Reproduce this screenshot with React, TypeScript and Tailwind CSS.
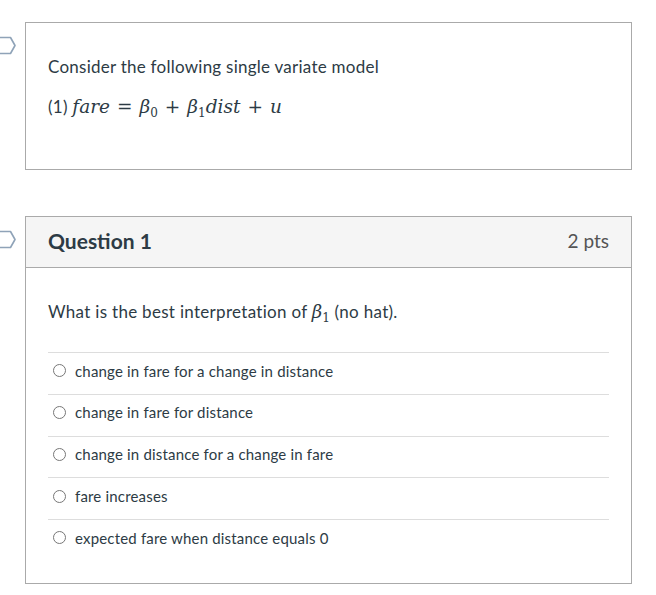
import React from "react";

const Tag = () => (
  <svg width="17" height="19" viewBox="0 0 17 19" className="absolute left-0" style={{ top: 14 }}>
    <path d="M-2 1.5 H10.5 L15 9.5 L10.5 17.5 H-2" fill="white" stroke="#8fa3b8" strokeWidth="1.6" strokeLinejoin="round" />
  </svg>
);

const serif = '"DejaVu Serif", "Liberation Serif", serif';

const M = ({ children, className = "" }: { children: React.ReactNode; className?: string }) => (
  <span className={`italic ${className}`} style={{ fontFamily: serif }}>{children}</span>
);

const Op = ({ children }: { children: React.ReactNode }) => (
  <span className="not-italic mx-[7px]" style={{ fontFamily: serif }}>{children}</span>
);

const Sub = ({ children }: { children: React.ReactNode }) => (
  <span className="not-italic text-[12px] relative top-[4px]" style={{ fontFamily: serif }}>{children}</span>
);

const answers = [
  "change in fare for a change in distance",
  "change in fare for distance",
  "change in distance for a change in fare",
  "fare increases",
  "expected fare when distance equals 0",
];

export default function App() {
  return (
    <div className="w-[656px] h-[595px] bg-white text-[#2d3b45] pt-[22px]" style={{ fontFamily: 'Lato, "Noto Sans", sans-serif' }}>
      <div className="relative">
        <Tag />
        <div className="ml-[25px] w-[607px] h-[148px] border border-[#aaaaaa] px-[22px] pt-[31px]">
          <p className="text-[17px] tracking-[0.25px] leading-[26px]">Consider the following single variate model</p>
          <p className="text-[17px] tracking-[0.25px] leading-[26px] mt-[13px] flex items-baseline">
            <span>(1)&nbsp;</span>
            <span className="text-[18.5px] tracking-normal">
              <M>fare</M>
              <Op>=</Op>
              <M>β</M>
              <Sub>0</Sub>
              <Op>+</Op>
              <M>β</M>
              <Sub>1</Sub>
              <M>dist</M>
              <Op>+</Op>
              <M>u</M>
            </span>
          </p>
        </div>
      </div>

      <div className="relative mt-[46px]">
        <Tag />
        <div className="ml-[25px] w-[607px] h-[368px] border border-[#aaaaaa] flex flex-col">
          <div className="h-[51px] bg-[#f5f5f5] border-b border-[#aaaaaa] flex items-center justify-between pl-[22px] pr-[22px] pb-[4px] shrink-0">
            <span className="text-[21px] font-bold leading-none">Question 1</span>
            <span className="text-[19px] leading-none text-[#545454]">2 pts</span>
          </div>
          <div className="px-[22px] pt-[30px]">
            <p className="text-[17px] tracking-[0.3px] leading-[26px]">
              What is the best interpretation of{" "}
              <span className="tracking-normal text-[18px]"><M>β</M><Sub>1</Sub></span> (no hat).
            </p>
            <div className="mt-[25px]">
              {answers.map((a) => (
                <div key={a} className="h-[41.75px] border-t border-[#dddddd] flex items-center pl-[5px] pb-[5px]">
                  <span className="w-[13px] h-[13px] rounded-full border border-[#777777] bg-white shrink-0"></span>
                  <span className="ml-[9px] text-[15px] tracking-[0.18px]">{a}</span>
                </div>
              ))}
            </div>
          </div>
        </div>
      </div>
    </div>
  );
}
